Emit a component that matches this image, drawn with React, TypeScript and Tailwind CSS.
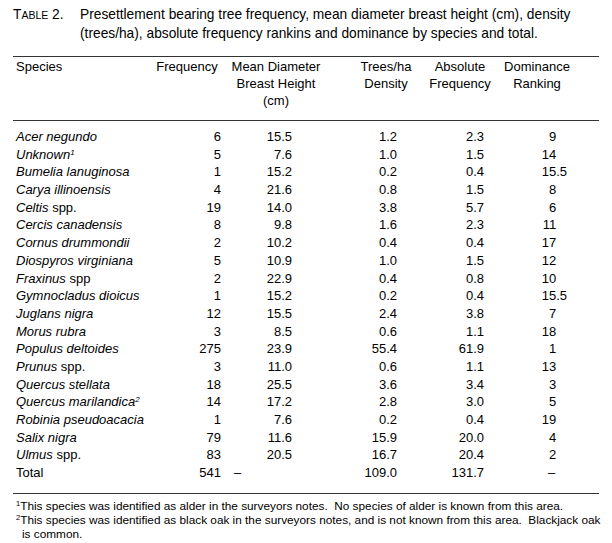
import React from "react";

type Row = {
  genus: string;
  restRoman?: string;
  note?: string;
  freq: string;
  dbh: string;
  density: string;
  abs: string;
  rank: string;
};

const rows: Row[] = [
  { genus: "Acer negundo", freq: "6", dbh: "15.5", density: "1.2", abs: "2.3", rank: "9" },
  { genus: "Unknown", note: "1", freq: "5", dbh: "7.6", density: "1.0", abs: "1.5", rank: "14" },
  { genus: "Bumelia lanuginosa", freq: "1", dbh: "15.2", density: "0.2", abs: "0.4", rank: "15.5" },
  { genus: "Carya illinoensis", freq: "4", dbh: "21.6", density: "0.8", abs: "1.5", rank: "8" },
  { genus: "Celtis", restRoman: " spp.", freq: "19", dbh: "14.0", density: "3.8", abs: "5.7", rank: "6" },
  { genus: "Cercis canadensis", freq: "8", dbh: "9.8", density: "1.6", abs: "2.3", rank: "11" },
  { genus: "Cornus drummondii", freq: "2", dbh: "10.2", density: "0.4", abs: "0.4", rank: "17" },
  { genus: "Diospyros virginiana", freq: "5", dbh: "10.9", density: "1.0", abs: "1.5", rank: "12" },
  { genus: "Fraxinus", restRoman: " spp", freq: "2", dbh: "22.9", density: "0.4", abs: "0.8", rank: "10" },
  { genus: "Gymnocladus dioicus", freq: "1", dbh: "15.2", density: "0.2", abs: "0.4", rank: "15.5" },
  { genus: "Juglans nigra", freq: "12", dbh: "15.5", density: "2.4", abs: "3.8", rank: "7" },
  { genus: "Morus rubra", freq: "3", dbh: "8.5", density: "0.6", abs: "1.1", rank: "18" },
  { genus: "Populus deltoides", freq: "275", dbh: "23.9", density: "55.4", abs: "61.9", rank: "1" },
  { genus: "Prunus", restRoman: " spp.", freq: "3", dbh: "11.0", density: "0.6", abs: "1.1", rank: "13" },
  { genus: "Quercus stellata", freq: "18", dbh: "25.5", density: "3.6", abs: "3.4", rank: "3" },
  { genus: "Quercus marilandica", note: "2", freq: "14", dbh: "17.2", density: "2.8", abs: "3.0", rank: "5" },
  { genus: "Robinia pseudoacacia", freq: "1", dbh: "7.6", density: "0.2", abs: "0.4", rank: "19" },
  { genus: "Salix nigra", freq: "79", dbh: "11.6", density: "15.9", abs: "20.0", rank: "4" },
  { genus: "Ulmus", restRoman: " spp.", freq: "83", dbh: "20.5", density: "16.7", abs: "20.4", rank: "2" },
];

const grid = "grid grid-cols-[137px_78px_116px_84px_64px_108px]";

// rank column is lined up on the decimal point
const Rank = ({ value }: { value: string }) =>
  value.includes(".") ? (
    <>{value}</>
  ) : (
    <>
      {value}
      <span className="invisible">.5</span>
    </>
  );

export default function App() {
  return (
    <div
      className="w-[612px] h-[543px] bg-white text-black px-[13px] overflow-hidden"
      style={{ fontFamily: '"Liberation Sans", Arial, sans-serif' }}
    >
      {/* caption */}
      <div className="flex pt-[5px] text-[13.75px] leading-[19px] whitespace-nowrap">
        <div className="w-[67px] shrink-0">
          T<span className="text-[10.5px]">ABLE</span> 2.
        </div>
        <div>
          Presettlement bearing tree frequency, mean diameter breast height (cm), density
          <br />
          (trees/ha), absolute frequency rankins and dominance by species and total.
        </div>
      </div>

      <div className="mt-[13px] border-t border-[#333]" />

      {/* header */}
      <div className={`${grid} text-[13px] leading-[17px] pt-[1px] pb-[11px] border-b border-[#333]`}>
        <div className="pl-[3px]">Species</div>
        <div className="text-center pr-[4px] whitespace-nowrap">Frequency</div>
        <div className="text-center pr-[20px] whitespace-nowrap">
          Mean Diameter
          <br />
          Breast Height
          <br />
          (cm)
        </div>
        <div className="text-center whitespace-nowrap">
          Trees/ha
          <br />
          Density
        </div>
        <div className="text-center whitespace-nowrap">
          Absolute
          <br />
          Frequency
        </div>
        <div className="text-center pr-[18px] whitespace-nowrap">
          Dominance
          <br />
          Ranking
        </div>
      </div>

      {/* body */}
      <div className="pt-[7px] pb-[11px] text-[13px] leading-[17.68px] border-b border-[#333]">
        {rows.map((r) => (
          <div key={r.genus} className={grid}>
            <div className="pl-[3px] whitespace-nowrap">
              <span className="italic">{r.genus}</span>
              {r.note && <sup className="text-[8px] italic">{r.note}</sup>}
              {r.restRoman}
            </div>
            <div className="text-right pr-[7px]">{r.freq}</div>
            <div className="text-right pr-[52px]">{r.dbh}</div>
            <div className="text-right pr-[31px]">{r.density}</div>
            <div className="text-right pr-[8px]">{r.abs}</div>
            <div className="text-right pr-[33px]">
              <Rank value={r.rank} />
            </div>
          </div>
        ))}
        <div className={grid}>
          <div className="pl-[3px]">Total</div>
          <div className="text-right pr-[7px]">541</div>
          <div className="pl-[6px]">–</div>
          <div className="text-right pr-[31px]">109.0</div>
          <div className="text-right pr-[8px]">131.7</div>
          <div className="pl-[56px]">–</div>
        </div>
      </div>

      {/* footnotes */}
      <div className="pt-[5px] pl-[3px] text-[11.8px] leading-[14px] whitespace-nowrap">
        <div>
          <sup className="text-[7.5px]">1</sup>This species was identified as alder in the surveyors notes.&nbsp; No
          species of alder is known from this area.
        </div>
        <div>
          <sup className="text-[7.5px]">2</sup>This species was identified as black oak in the surveyors notes, and is
          not known from this area.&nbsp; Blackjack oak
          <br />
          <span className="pl-[6px]">is common.</span>
        </div>
      </div>
    </div>
  );
}
